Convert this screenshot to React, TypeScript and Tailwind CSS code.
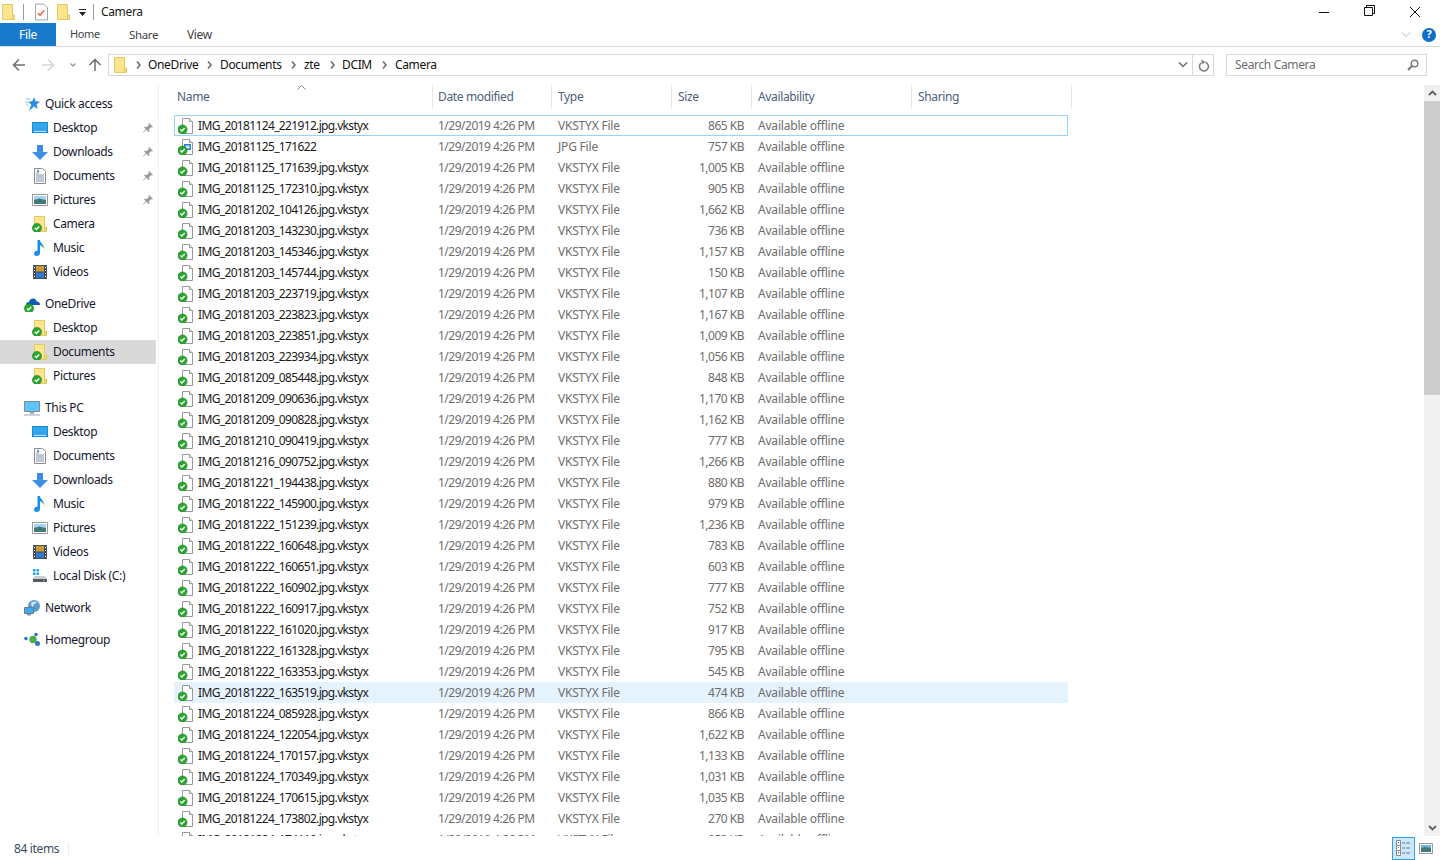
import React from "react"

const files: [string, string][] = [
  ["IMG_20181124_221912.jpg.vkstyx", "865 KB"],
  ["IMG_20181125_171622", "757 KB"],
  ["IMG_20181125_171639.jpg.vkstyx", "1,005 KB"],
  ["IMG_20181125_172310.jpg.vkstyx", "905 KB"],
  ["IMG_20181202_104126.jpg.vkstyx", "1,662 KB"],
  ["IMG_20181203_143230.jpg.vkstyx", "736 KB"],
  ["IMG_20181203_145346.jpg.vkstyx", "1,157 KB"],
  ["IMG_20181203_145744.jpg.vkstyx", "150 KB"],
  ["IMG_20181203_223719.jpg.vkstyx", "1,107 KB"],
  ["IMG_20181203_223823.jpg.vkstyx", "1,167 KB"],
  ["IMG_20181203_223851.jpg.vkstyx", "1,009 KB"],
  ["IMG_20181203_223934.jpg.vkstyx", "1,056 KB"],
  ["IMG_20181209_085448.jpg.vkstyx", "848 KB"],
  ["IMG_20181209_090636.jpg.vkstyx", "1,170 KB"],
  ["IMG_20181209_090828.jpg.vkstyx", "1,162 KB"],
  ["IMG_20181210_090419.jpg.vkstyx", "777 KB"],
  ["IMG_20181216_090752.jpg.vkstyx", "1,266 KB"],
  ["IMG_20181221_194438.jpg.vkstyx", "880 KB"],
  ["IMG_20181222_145900.jpg.vkstyx", "979 KB"],
  ["IMG_20181222_151239.jpg.vkstyx", "1,236 KB"],
  ["IMG_20181222_160648.jpg.vkstyx", "783 KB"],
  ["IMG_20181222_160651.jpg.vkstyx", "603 KB"],
  ["IMG_20181222_160902.jpg.vkstyx", "777 KB"],
  ["IMG_20181222_160917.jpg.vkstyx", "752 KB"],
  ["IMG_20181222_161020.jpg.vkstyx", "917 KB"],
  ["IMG_20181222_161328.jpg.vkstyx", "795 KB"],
  ["IMG_20181222_163353.jpg.vkstyx", "545 KB"],
  ["IMG_20181222_163519.jpg.vkstyx", "474 KB"],
  ["IMG_20181224_085928.jpg.vkstyx", "866 KB"],
  ["IMG_20181224_122054.jpg.vkstyx", "1,622 KB"],
  ["IMG_20181224_170157.jpg.vkstyx", "1,133 KB"],
  ["IMG_20181224_170349.jpg.vkstyx", "1,031 KB"],
  ["IMG_20181224_170615.jpg.vkstyx", "1,035 KB"],
  ["IMG_20181224_173802.jpg.vkstyx", "270 KB"],
  ["IMG_20181224_174110.jpg.vkstyx", "853 KB"],
]

const Badge = ({ x = 0, y = 0 }: { x?: number; y?: number }) => (
  <g transform={`translate(${x} ${y})`}>
    <circle cx="5" cy="11" r="4.6" fill="#2aa52e" stroke="#1d8a24" strokeWidth="0.6" />
    <path d="M2.9 11l1.5 1.6 2.8-3" fill="none" stroke="#fff" strokeWidth="1.4" />
  </g>
)

const Folder = ({ synced }: { synced?: boolean }) => (
  <svg width="16" height="16" viewBox="0 0 16 16">
    <path d="M2.5 0.5h10v15h-10z" fill="#fde58f" stroke="#e6c862" />
    <path d="M12.5 11h2v4.5h-2z" fill="#f8dc7c" stroke="#e6c862" />
    {synced && <Badge x={0} y={1} />}
  </svg>
)

const FileIcon = ({ jpg }: { jpg?: boolean }) => (
  <svg width="16" height="16" viewBox="0 0 16 16">
    <path d="M4.5 0.5h7l3 3v12h-10z" fill="#fff" stroke="#9a9a9a" />
    <path d="M11.5 0.5v3h3" fill="#eee" stroke="#9a9a9a" />
    {jpg && <path d="M6 5h7v6H6z" fill="#2f7fd0" />}
    {jpg && <path d="M7.5 6.5h4v3h-4z" fill="#cfe6fa" />}
    <Badge x={-0.5} y={0.5} />
  </svg>
)

const DesktopIcon = () => (
  <svg width="16" height="16" viewBox="0 0 16 16">
    <path d="M0 2h16v11H0z" fill="#1a8ad6" />
    <path d="M1 3h14v9H1z" fill="#2ea7ee" />
    <path d="M2 11h12v1H2z" fill="#bfe4fa" />
  </svg>
)

const DownloadsIcon = () => (
  <svg width="16" height="16" viewBox="0 0 16 16">
    <path d="M5 1h6v7h5l-8 8-8-8h5z" fill="#3c8fe0" />
  </svg>
)

const DocumentsIcon = () => (
  <svg width="16" height="16" viewBox="0 0 16 16">
    <path d="M2.5 0.5h8l3 3v12h-11z" fill="#fff" stroke="#8d8d8d" />
    <path d="M4 5h3M4 7h8M4 9h8M4 11h8M4 13h8" stroke="#7b93ab" />
    <path d="M5 2h2v2H5z" fill="#3d9be0" />
  </svg>
)

const PicturesIcon = () => (
  <svg width="16" height="16" viewBox="0 0 16 16">
    <path d="M0.5 2.5h15v11h-15z" fill="#fff" stroke="#9a9a9a" />
    <path d="M2 4h12v4H2z" fill="#a9d4f0" />
    <path d="M2 8l5-1.5 7 1.5v4H2z" fill="#3f7a78" />
  </svg>
)

const MusicIcon = () => (
  <svg width="16" height="16" viewBox="0 0 16 16">
    <path d="M5.5 0h2.4c.3 3 4.4 4.5 3.9 9-.8-2-2.3-3.2-3.8-3.4V13c0 1.700-1.400 3-3.300 3C3.100 16 2 15 2 13.500c0-1.800 1.800-3.100 3.500-2.700z" fill="#1b8fe6" />
  </svg>
)

const VideosIcon = () => (
  <svg width="16" height="16" viewBox="0 0 16 16">
    <path d="M1 1h14v14H1z" fill="#4a4f55" />
    <path d="M4 2h8v5.500H4z" fill="#c49a3a" />
    <path d="M4 8.500h8V14H4z" fill="#2f78c8" />
    <path d="M2 3h1v1H2zM2 6h1v1H2zM2 9h1v1H2zM2 12h1v1H2zM13 3h1v1h-1zM13 6h1v1h-1zM13 9h1v1h-1zM13 12h1v1h-1z" fill="#fff" />
  </svg>
)

const DiskIcon = () => (
  <svg width="16" height="16" viewBox="0 0 16 16">
    <path d="M1 1h2.500v2.500H1zM4.500 1H7v2.500H4.500zM1 4.500h2.500V7H1zM4.500 4.500H7V7H4.500z" fill="#22a5e8" />
    <path d="M3 8h10l2 3v3H1v-3z" fill="#c9ced2" />
    <path d="M1 11h14v3H1z" fill="#55595e" />
    <path d="M11 12h1.500v1H11z" fill="#5fe05f" />
  </svg>
)

const StarIcon = () => (
  <svg width="16" height="16" viewBox="0 0 16 16">
    <path d="M2 3h4M1 6h3M2 9h2" stroke="#8cc7f0" />
    <path d="M10 1l1.600 4.300L16 5.600l-3.400 2.900 1.100 4.500L10 10.600 5 15l2.300-6.400L4 5.700l4.300-.4z" fill="#2a8fe0" />
  </svg>
)

const OneDriveIcon = () => (
  <svg width="16" height="16" viewBox="0 0 16 16">
    <path d="M2 9c0-2 1-3 3-3 .5-2 2-3.500 4-3.500 2 0 3.300 1.200 3.700 3C14.500 5.500 16 6.800 16 8.500V9H2z" fill="#0f5fb0" />
    <Badge x={0} y={1.5} />
  </svg>
)

const PcIcon = () => (
  <svg width="16" height="16" viewBox="0 0 16 16">
    <path d="M0.5 1.500h15v10h-15z" fill="#5ec4f7" stroke="#7c8b96" />
    <path d="M6 12h4v2H6z" fill="#a5b0b8" />
    <path d="M0 14.500h16v1H0z" fill="#9aa6ae" />
  </svg>
)

const NetworkIcon = () => (
  <svg width="16" height="16" viewBox="0 0 16 16">
    <circle cx="10" cy="6" r="6" fill="#5d9ad0" />
    <path d="M7 3c2-2 5-2 6 0-2 0-4 2-4 4-1 0-2-2-2-4z" fill="#cfe3f3" />
    <path d="M0.500 7.500h9v6h-9z" fill="#3fa8e8" stroke="#6d7b86" />
    <path d="M3 14h4v1.500H3z" fill="#8d99a3" />
  </svg>
)

const HomegroupIcon = () => (
  <svg width="16" height="16" viewBox="0 0 16 16">
    <circle cx="9" cy="7.500" r="3.700" fill="#48b048" />
    <circle cx="2" cy="6.500" r="1.800" fill="#2f76c2" />
    <circle cx="12" cy="2.500" r="1.800" fill="#2f76c2" />
    <circle cx="13.500" cy="11.500" r="2.500" fill="#2f76c2" />
  </svg>
)

const PinIcon = () => (
  <svg width="10" height="10" viewBox="0 0 10 10">
    <path d="M6 0l4 4-1 .5-1-.3-2 2 .3 2L5.500 9 3.200 6.800 0.500 9.500 0 9l2.700-2.800L1 4.500l.8-.8 2 .3 2-2L5.500 1z" fill="#9a9a9a" />
  </svg>
)

const Chevron = () => (
  <svg width="5" height="8" viewBox="0 0 5 8" className="shrink-0">
    <path d="M1 0.500L4 4 1 7.500" fill="none" stroke="#6e6e6e" strokeWidth="1.6" />
  </svg>
)

const NavRow = ({ icon, label, level = 2, pin, active }: { icon: React.ReactNode; label: string; level?: 1 | 2; pin?: boolean; active?: boolean }) => (
  <div className={`flex h-6 w-[156px] items-center ${level === 1 ? "pl-6" : "pl-8"} ${active ? "bg-[#d9d9d9]" : ""}`}>
    <span className="mr-[5px] flex w-4 shrink-0 items-center">{icon}</span>
    <span className="flex-1 text-[#14182c]">{label}</span>
    {pin && <span className="mr-[3px] flex"><PinIcon /></span>}
  </div>
)

const Crumb = ({ label, width }: { label: string; width: string }) => (
  <>
    <span className={`shrink-0 text-[#111] ${width}`}>{label}</span>
    <Chevron />
  </>
)

const columns = [
  { label: "Name", className: "w-[262px] pl-[6px]" },
  { label: "Date modified", className: "w-[119px] pl-[5px]" },
  { label: "Type", className: "w-[120px] pl-[6px]" },
  { label: "Size", className: "w-[80px] pl-[6px]" },
  { label: "Availability", className: "w-[160px] pl-[6px]" },
  { label: "Sharing", className: "w-[160px] pl-[6px]" },
]

export default function App() {
  return (
    <div className="flex h-[860px] w-[1440px] flex-col overflow-hidden bg-white text-[12px] font-['Noto_Sans',sans-serif] tracking-[-0.35px]">
      {/* title bar */}
      <div className="flex h-[23px] shrink-0 items-center">
        <span className="flex"><Folder /></span>
        <span className="ml-[7px] h-[16px] w-px bg-[#9a9a9a]" />
        <svg width="13" height="18" viewBox="0 0 14 18" className="ml-[11px]">
          <path d="M0.5 0.5h9l4 4v13H0.500z" fill="#fff" stroke="#9a9a9a" />
          <path d="M3 10l2.500 2.500L10 7" fill="none" stroke="#e8592b" strokeWidth="1.4" />
        </svg>
        <span className="ml-[7px] flex"><Folder /></span>
        <svg width="9" height="8" viewBox="0 0 9 8" className="ml-[7px] mt-[3px]">
          <path d="M1 0h7v1H1z" fill="#222" />
          <path d="M1 3h7L4.500 7z" fill="#222" />
        </svg>
        <span className="ml-[6px] h-[16px] w-px bg-[#9a9a9a]" />
        <span className="ml-[7px] flex-1 text-[#1a1a1a]">Camera</span>
        <svg width="120" height="14" viewBox="0 0 120 14" className="mr-[1px]">
          <path d="M0 7.500h10" stroke="#111" />
          <path d="M45.500 2.500h8v8h-8zM47.500 2.500V0.500h8v8h-2" fill="none" stroke="#111" />
          <path d="M91 2l10 10M101 2L91 12" stroke="#111" />
        </svg>
      </div>

      {/* ribbon tabs */}
      <div className="flex h-6 shrink-0 items-stretch border-b border-[#dadbdc]">
        <div className="flex w-[56px] items-center justify-center bg-[#1979ca] text-white">File</div>
        <span className="ml-[14px] flex w-[59px] items-center text-[11px] text-[#444]">Home</span>
        <span className="flex w-[58px] items-center text-[11.5px] text-[#444]">Share</span>
        <span className="flex flex-1 items-center text-[#444]">View</span>
        <svg width="10" height="6" viewBox="0 0 10 6" className="mr-[11px] self-center">
          <path d="M1 0.5l4 4 4-4" fill="none" stroke="#b5b5b5" />
        </svg>
        <span className="mr-[4px] flex h-[14px] w-[14px] items-center justify-center self-center rounded-full bg-[#0c6fc9] text-[11px] font-bold text-white">?</span>
      </div>

      {/* address row */}
      <div className="flex h-[38px] shrink-0 items-center pb-[2px]">
        <svg width="96" height="14" viewBox="0 0 96 14" className="ml-[12px]">
          <path d="M7 1.500L1.500 7 7 12.500M2 7h11" fill="none" stroke="#6d6d6d" strokeWidth="1.5" />
          <path d="M36 1.500L41.500 7 36 12.500M41 7H30" fill="none" stroke="#d5d5d5" strokeWidth="1.5" />
          <path d="M58.500 5.500l2.500 2.500 2.500-2.500" fill="none" stroke="#8a8a8a" strokeWidth="1.2" />
          <path d="M77.500 7L83 1.500 88.500 7M83 2v11" fill="none" stroke="#6d6d6d" strokeWidth="1.5" />
        </svg>
        <div className="flex h-[22px] w-[1106px] items-center border border-[#d9d9d9]">
          <span className="ml-[3px] flex"><Folder /></span>
          <span className="ml-[8px] flex"><Chevron /></span>
          <span className="ml-[7px] flex items-center">
            <Crumb label="OneDrive" width="w-[59px]" />
            <span className="w-[8px]" />
            <Crumb label="Documents" width="w-[71px]" />
            <span className="w-[8px]" />
            <Crumb label="zte" width="w-[26px]" />
            <span className="w-[7px]" />
            <Crumb label="DCIM" width="w-[40px]" />
            <span className="w-[8px]" />
            <span className="text-[#111]">Camera</span>
          </span>
          <span className="flex-1" />
          <svg width="10" height="6" viewBox="0 0 10 6" className="mr-[4px]">
            <path d="M1 0.5l4 4 4-4" fill="none" stroke="#6d6d6d" strokeWidth="1.5" />
          </svg>
          <div className="flex h-full w-[21px] items-center justify-center border-l border-[#d9d9d9] pl-px">
            <svg width="12" height="13" viewBox="0 0 12 13">
              <path d="M7.500 3.200A4.500 4.500 0 1 1 3 4" fill="none" stroke="#808080" strokeWidth="1.6" />
              <path d="M3.500 0.500l4 2.700-4 2z" fill="#808080" />
            </svg>
          </div>
        </div>
        <div className="ml-[12px] flex h-[22px] w-[201px] items-center justify-between border border-[#d9d9d9] pl-2 pr-[7px] text-[#6d6d6d]">
          <span>Search Camera</span>
          <svg width="12" height="12" viewBox="0 0 12 12">
            <circle cx="7.500" cy="4.500" r="3.300" fill="none" stroke="#777" strokeWidth="1.4" />
            <path d="M5 7L1 11" stroke="#777" strokeWidth="2" />
          </svg>
        </div>
      </div>

      {/* body */}
      <div className="flex min-h-0 flex-1">
        <nav className="w-[159px] shrink-0 border-r border-[#f0f0f0] pt-[7px]">
          <NavRow level={1} icon={<StarIcon />} label="Quick access" />
          <NavRow icon={<DesktopIcon />} label="Desktop" pin />
          <NavRow icon={<DownloadsIcon />} label="Downloads" pin />
          <NavRow icon={<DocumentsIcon />} label="Documents" pin />
          <NavRow icon={<PicturesIcon />} label="Pictures" pin />
          <NavRow icon={<Folder synced />} label="Camera" />
          <NavRow icon={<MusicIcon />} label="Music" />
          <NavRow icon={<VideosIcon />} label="Videos" />
          <div className="h-2" />
          <NavRow level={1} icon={<OneDriveIcon />} label="OneDrive" />
          <NavRow icon={<Folder synced />} label="Desktop" />
          <NavRow icon={<Folder synced />} label="Documents" active />
          <NavRow icon={<Folder synced />} label="Pictures" />
          <div className="h-2" />
          <NavRow level={1} icon={<PcIcon />} label="This PC" />
          <NavRow icon={<DesktopIcon />} label="Desktop" />
          <NavRow icon={<DocumentsIcon />} label="Documents" />
          <NavRow icon={<DownloadsIcon />} label="Downloads" />
          <NavRow icon={<MusicIcon />} label="Music" />
          <NavRow icon={<PicturesIcon />} label="Pictures" />
          <NavRow icon={<VideosIcon />} label="Videos" />
          <NavRow icon={<DiskIcon />} label="Local Disk (C:)" />
          <div className="h-2" />
          <NavRow level={1} icon={<NetworkIcon />} label="Network" />
          <div className="h-2" />
          <NavRow level={1} icon={<HomegroupIcon />} label="Homegroup" />
        </nav>

        <main className="min-w-0 flex-1 overflow-hidden">
          <div className="relative ml-[12px] flex h-6">
            {columns.map((c) => (
              <div key={c.label} className={`flex shrink-0 items-center border-r border-[#e5e5e5] text-[#4c607a] ${c.className}`}>
                {c.label}
              </div>
            ))}
            <svg width="9" height="5" viewBox="0 0 9 5" className="absolute left-[126px] top-0">
              <path d="M0.5 4.500l4-4 4 4" fill="none" stroke="#8a8a8a" />
            </svg>
          </div>
          <div className="ml-[15px] mt-[6px] w-[894px]">
            {files.map(([name, size], i) => (
              <div
                key={name}
                className={`box-border flex h-[21px] items-center ${i === 0 ? "border border-[#99d1ff] pl-[3px]" : "pl-[4px]"} ${i === 27 ? "bg-[#e5f3ff]" : ""}`}
              >
                <span className="flex w-5 shrink-0"><FileIcon jpg={i === 1} /></span>
                <span className="w-[240px] shrink-0 tracking-[-0.65px] text-[#1a1a1a]">{name}</span>
                <span className="w-[120px] shrink-0 tracking-[-0.5px] text-[#6d6d6d]">1/29/2019 4:26 PM</span>
                <span className="w-[120px] shrink-0 tracking-[-0.2px] text-[#6d6d6d]">{i === 1 ? "JPG File" : "VKSTYX File"}</span>
                <span className="w-[66px] shrink-0 text-right tracking-[-0.5px] text-[#6d6d6d]">{size}</span>
                <span className="ml-[14px] tracking-[-0.2px] text-[#6d6d6d]">Available offline</span>
              </div>
            ))}
          </div>
        </main>

        {/* scrollbar */}
        <div className="flex w-4 shrink-0 flex-col bg-[#f0f0f0]">
          <div className="flex h-4 items-center justify-center">
            <svg width="9" height="6" viewBox="0 0 9 6">
              <path d="M1 5l3.500-3.500L8 5" fill="none" stroke="#606060" strokeWidth="1.8" />
            </svg>
          </div>
          <div className="h-[294px] bg-[#cdcdcd]" />
          <div className="flex-1" />
          <div className="flex h-4 items-center justify-center">
            <svg width="9" height="6" viewBox="0 0 9 6">
              <path d="M1 1l3.500 3.500L8 1" fill="none" stroke="#606060" strokeWidth="1.8" />
            </svg>
          </div>
        </div>
      </div>

      {/* status bar */}
      <div className="flex h-6 shrink-0 items-center">
        <span className="ml-[14px] mt-[2px] w-[54px] text-[#3d4a63]">84 items</span>
        <span className="mt-[2px] h-[12px] w-px bg-[#ececec]" />
        <span className="flex-1" />
        <div className="flex h-[23px] w-[23px] items-center justify-center border border-[#3aa0dc] bg-[#cce8ff]">
          <svg width="15" height="16" viewBox="0 0 15 16">
            <path d="M0.5 0.500h4v15h-4zM0.500 5.500h4M0.500 10.500h4" fill="#fff" stroke="#8a8a8a" />
            <path d="M2 2h1v1H2z" fill="#555" />
            <path d="M2 7h1v1H2z" fill="#2f8ad6" />
            <path d="M2 12h1v1H2z" fill="#d23" />
            <path d="M6 3h3M10 3h4M6 8h3M10 8h4M6 13h3M10 13h4" stroke="#777" />
          </svg>
        </div>
        <span className="ml-[4px] mr-[7px] flex">
          <svg width="14" height="11" viewBox="0 0 14 11">
            <path d="M0.5 0.500h13v10h-13z" fill="#fff" stroke="#999" />
            <path d="M2 2h10v3H2z" fill="#6fb6e8" />
            <path d="M2 5l4-1 6 1v4H2z" fill="#3f7a78" />
          </svg>
        </span>
      </div>
    </div>
  )
}
